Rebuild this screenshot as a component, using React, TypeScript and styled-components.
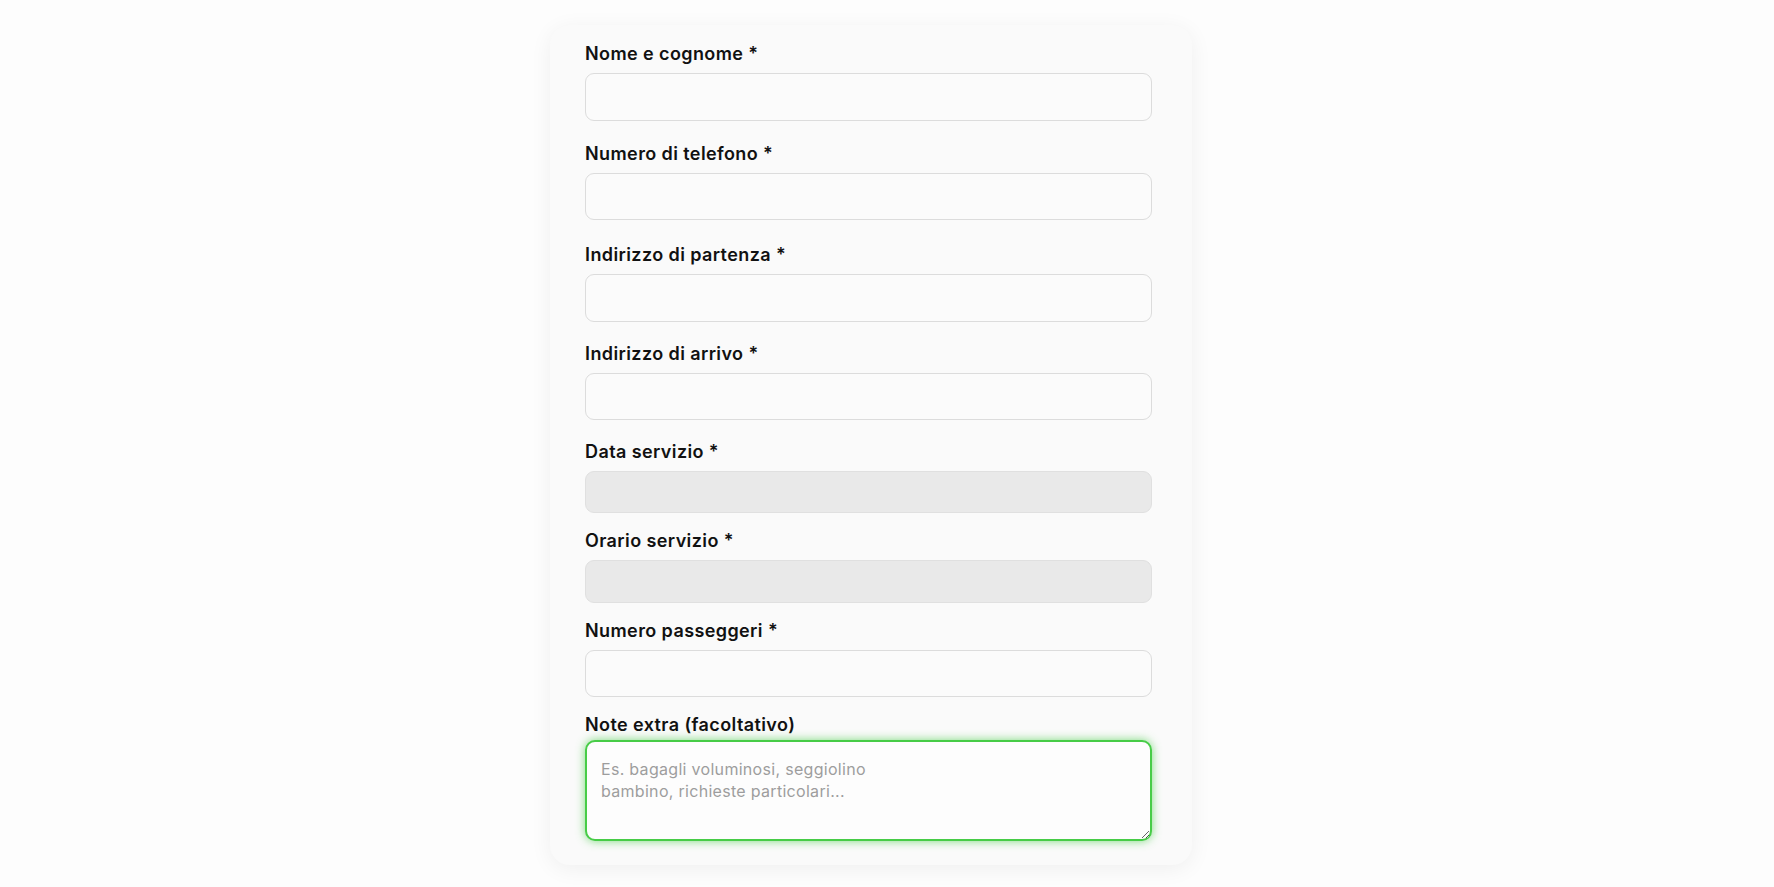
import styled, { createGlobalStyle } from "styled-components";

const GlobalStyle = createGlobalStyle`
  html, body {
    margin: 0;
    padding: 0;
    background: #fdfdfd;
    font-family: "Inter", "Liberation Sans", sans-serif;
  }
`;

interface FieldDef {
  label: string;
  height: number;
  space: number;
  disabled?: boolean;
}

const fields: FieldDef[] = [
  { label: "Nome e cognome *", height: 48, space: 0 },
  { label: "Numero di telefono *", height: 47, space: 22 },
  { label: "Indirizzo di partenza *", height: 48, space: 24 },
  { label: "Indirizzo di arrivo *", height: 47, space: 21 },
  { label: "Data servizio *", height: 42, space: 21, disabled: true },
  { label: "Orario servizio *", height: 43, space: 17, disabled: true },
  { label: "Numero passeggeri *", height: 47, space: 17 },
];

const App = () => {
  return (
    <Page>
      <GlobalStyle />
      <Card>
        {fields.map((f) => (
          <Field key={f.label} $space={f.space}>
            <Label>{f.label}</Label>
            <Input type="text" $height={f.height} disabled={f.disabled} />
          </Field>
        ))}
        <Field $space={17}>
          <Label $tight>Note extra (facoltativo)</Label>
          <Notes
            placeholder={"Es. bagagli voluminosi, seggiolino\nbambino, richieste particolari..."}
          />
        </Field>
      </Card>
    </Page>
  );
};

const Page = styled.div`
  min-height: 887px;
  display: flex;
  justify-content: center;
  align-items: flex-start;
  padding: 25px 32px 0 0;
  box-sizing: border-box;
`;

const Card = styled.form`
  width: 642px;
  box-sizing: border-box;
  padding: 18px 40px 24px 35px;
  background: #fafafa;
  border-radius: 20px;
  box-shadow: 0 4px 22px rgba(0, 0, 0, 0.06);
  display: flex;
  flex-direction: column;
`;

const Field = styled.div<{ $space: number }>`
  display: flex;
  flex-direction: column;
  margin-top: ${(p) => p.$space}px;
`;

const Label = styled.label<{ $tight?: boolean }>`
  font-size: 18px;
  line-height: 22px;
  font-weight: 600;
  letter-spacing: 0.4px;
  color: #111;
  margin-bottom: ${(p) => (p.$tight ? 4 : 8)}px;
`;

const Input = styled.input<{ $height: number }>`
  height: ${(p) => p.$height}px;
  box-sizing: border-box;
  width: 100%;
  border: 1.5px solid #dcdcdc;
  border-radius: 9px;
  background: #fbfbfb;
  padding: 0 14px;
  font-family: inherit;
  font-size: 16px;
  outline: none;

  &:disabled {
    background: #e9e9e9;
    border-color: #e0e0e0;
  }
`;

const Notes = styled.textarea`
  height: 101px;
  box-sizing: border-box;
  width: 100%;
  border: 2px solid #47cc47;
  border-radius: 10px;
  background: #fdfdfd;
  padding: 16px 14px;
  font-family: inherit;
  font-size: 16px;
  letter-spacing: 0.3px;
  line-height: 22px;
  box-shadow: 0 0 10px rgba(70, 205, 70, 0.7);
  outline: none;

  &::placeholder {
    color: #9d9d9d;
  }
`;

export default App;
